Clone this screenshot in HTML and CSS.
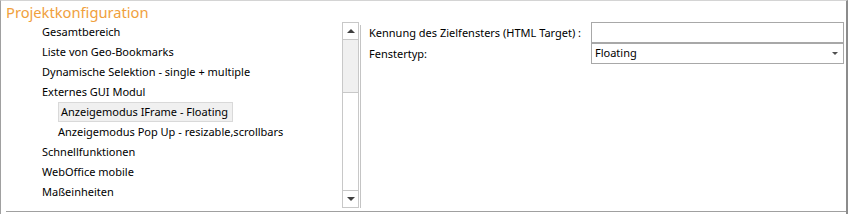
FILE: index.html
```html
<!DOCTYPE html>
<html lang="de">
<head>
  <meta charset="UTF-8">
  <title>Projektkonfiguration</title>
  <link rel="stylesheet" href="styles.css">
</head>
<body>
  <div class="frame">
    <h1 class="title">Projektkonfiguration</h1>
    <div class="content">
      <ul class="tree">
        <li class="lvl1">Gesamtbereich</li>
        <li class="lvl1">Liste von Geo-Bookmarks</li>
        <li class="lvl1">Dynamische Selektion - single + multiple</li>
        <li class="lvl1">Externes GUI Modul</li>
        <li class="lvl2"><span class="selected">Anzeigemodus IFrame - Floating</span></li>
        <li class="lvl2">Anzeigemodus Pop Up - resizable,scrollbars</li>
        <li class="lvl1">Schnellfunktionen</li>
        <li class="lvl1">WebOffice mobile</li>
        <li class="lvl1">Maßeinheiten</li>
      </ul>
      <div class="scrollbar">
        <div class="sb-btn"><span class="arrow-up"></span></div>
        <div class="sb-track"></div>
        <div class="sb-thumb"></div>
        <div class="sb-btn"><span class="arrow-down"></span></div>
      </div>
      <div class="separator"></div>
      <div class="form">
        <label class="form-label">Kennung des Zielfensters (HTML Target) :</label>
        <div class="field"></div>
        <label class="form-label">Fenstertyp:</label>
        <div class="field select">Floating<span class="arrow-down small"></span></div>
      </div>
    </div>
  </div>
</body>
</html>
```

FILE: styles.css
```css
body {
  margin: 0;
  background: #fff;
  font-family: "Noto Sans", "Liberation Sans", sans-serif;
  font-size: 11px;
  color: #000;
}
.frame {
  border-top: 1px solid #d4d4d4;
  border-left: 1px solid #a0a0a0;
  border-right: 2px solid #8c8c8c;
  box-sizing: border-box;
  width: 848px;
  height: 214px;
  display: flex;
  flex-direction: column;
}
.title {
  margin: 0;
  padding-left: 5px;
  height: 20px;
  line-height: 22px;
  font-size: 14.7px;
  font-weight: normal;
  color: #f0a03c;
}
.content {
  display: flex;
  height: 191px;
  border-bottom: 1px solid #a0a0a0;
  margin-left: 5px;
  box-sizing: border-box;
}
.tree {
  list-style: none;
  margin: 0;
  padding: 1px 0 0;
  width: 336px;
}
.tree li {
  height: 20px;
  line-height: 20px;
  white-space: nowrap;
}
.lvl1 { padding-left: 36px; }
.lvl2 { padding-left: 52px; }
.selected {
  display: inline-block;
  height: 18px;
  line-height: 18px;
  padding: 0 4px 0 2px;
  background: #f0f0f0;
  border: 1px solid #d9d9d9;
}
.scrollbar {
  width: 17px;
  height: 186px;
  margin-top: 1px;
  display: flex;
  flex-direction: column;
  box-sizing: border-box;
}
.sb-btn {
  height: 16px;
  border: 1px solid #c8c8c8;
  display: flex;
  align-items: center;
  justify-content: center;
}
.sb-track {
  height: 52px;
  background: #f0f0f0;
  border-left: 1px solid #c8c8c8;
  border-right: 1px solid #c8c8c8;
}
.sb-thumb {
  flex: 1;
  border: 1px solid #c8c8c8;
  border-bottom: none;
}
.arrow-up, .arrow-down {
  width: 0;
  height: 0;
  border-left: 4px solid transparent;
  border-right: 4px solid transparent;
}
.arrow-up { border-bottom: 4px solid #404040; }
.arrow-down { border-top: 4px solid #404040; }
.separator {
  width: 1px;
  height: 183px;
  margin: 4px 0 0 1px;
  background: #c4c4c4;
}
.form {
  display: grid;
  grid-template-columns: 222px 253px;
  grid-auto-rows: 21px;
  align-content: start;
  padding: 1px 0 0 8px;
}
.form-label {
  line-height: 22px;
  white-space: nowrap;
}
.field {
  border: 1px solid #a8a8a8;
  box-sizing: border-box;
  height: 22px;
}
.select {
  margin-top: -1px;
  padding-left: 3px;
  line-height: 20px;
  display: flex;
  align-items: center;
  justify-content: space-between;
  padding-right: 5px;
}
.arrow-down.small {
  border-left-width: 3px;
  border-right-width: 3px;
  border-top: 3px solid #505050;
}
```
